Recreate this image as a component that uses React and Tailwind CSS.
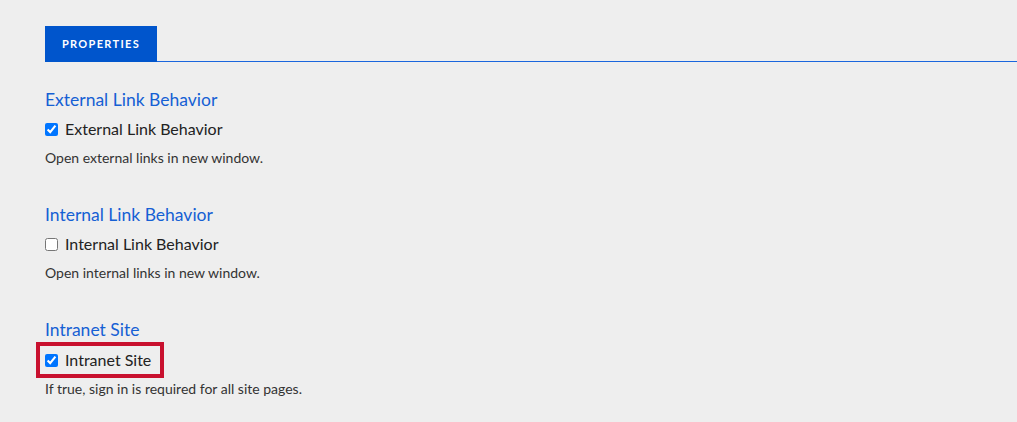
import React, { useState } from 'react';

const sections = [
  {
    id: 'external',
    title: 'External Link Behavior',
    label: 'External Link Behavior',
    help: 'Open external links in new window.',
    checked: true,
  },
  {
    id: 'internal',
    title: 'Internal Link Behavior',
    label: 'Internal Link Behavior',
    help: 'Open internal links in new window.',
    checked: false,
  },
  {
    id: 'intranet',
    title: 'Intranet Site',
    label: 'Intranet Site',
    help: 'If true, sign in is required for all site pages.',
    checked: true,
    highlight: true,
  },
];

function Field({ s, value, onChange }) {
  const row = (
    <label className="flex h-[22px] items-center gap-[7px] text-[16px] text-[#222]">
      <input
        type="checkbox"
        checked={value}
        onChange={(e) => onChange(e.target.checked)}
        className="m-0 h-[13px] w-[13px] accent-[#0075ff]"
      />
      {s.label}
    </label>
  );

  return (
    <section className="mt-[26px]">
      <h2 className="h-6 text-[17.5px] leading-6 text-[#1560d4]">{s.title}</h2>
      {s.highlight ? (
        <div className="-ml-[9px] inline-flex h-[36px] items-center border-4 border-[#c8102e] pl-[5px] pr-[9px]">
          {row}
        </div>
      ) : (
        <div className="mt-1.5">{row}</div>
      )}
      <p className={`${s.highlight ? 'mt-[2px]' : 'mt-[9px]'} text-[14px] leading-[18px] text-[#333]`}>{s.help}</p>
    </section>
  );
}

export default function App() {
  const [values, setValues] = useState(
    Object.fromEntries(sections.map((s) => [s.id, s.checked]))
  );

  return (
    <main
      className="min-h-[422px] bg-[#eeeeee] pl-[45px] pt-[26px]"
      style={{ fontFamily: 'Lato, "Open Sans", sans-serif' }}
    >
      {/* Tab bar */}
      <div className="flex items-end">
        <div className="flex h-9 w-[112px] items-center justify-center bg-[#0055cc] text-[11px] font-bold tracking-[0.12em] text-white">
          PROPERTIES
        </div>
        <div className="h-px flex-1 bg-[#1a66dd]" />
      </div>

      <div className="flex flex-col">
        {sections.map((s, i) => (
          <div key={s.id} className={i === 0 ? '' : 'mt-[10px]'}>
            <Field
              s={s}
              value={values[s.id]}
              onChange={(v) => setValues((prev) => ({ ...prev, [s.id]: v }))}
            />
          </div>
        ))}
      </div>
    </main>
  );
}
